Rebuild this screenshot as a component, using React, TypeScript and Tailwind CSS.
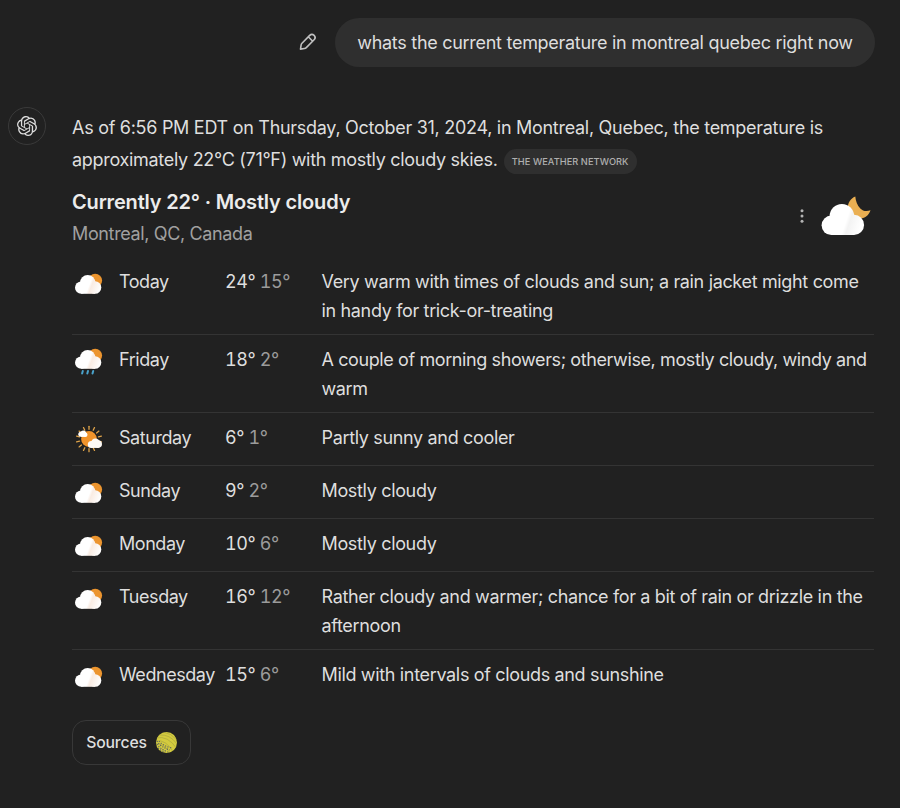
import React from "react";
import { SiOpenai } from "react-icons/si";

type Kind = "cloudy" | "rain" | "partly";

function WeatherIcon({ kind }: { kind: Kind }) {
  if (kind === "partly") {
    return (
      <svg width="28" height="28" viewBox="0 0 28 28" className="block">
        <g stroke="#e0a44a" strokeWidth="1.300" strokeLinecap="round">
          {Array.from({ length: 14 }, (_, i) => (
            <path key={i} d="M14 1.300v3" transform={`rotate(${(i * 360) / 14} 14 14)`} />
          ))}
        </g>
        <circle cx="14" cy="14" r="7.900" fill="#f0932b" />
        <g fill="#fff">
          <circle cx="5.800" cy="9.300" r="2.500" />
          <circle cx="8.300" cy="8.300" r="2.800" />
          <circle cx="10.300" cy="9.700" r="2.200" />
          <rect x="5.800" y="9" width="4.600" height="2.900" />
        </g>
        <g fill="#fdf9f5">
          <circle cx="16.300" cy="19.400" r="3.500" />
          <circle cx="20.400" cy="17.900" r="4.400" />
          <circle cx="23.200" cy="19.100" r="3.800" />
          <rect x="16.300" y="18" width="7" height="4.900" />
        </g>
      </svg>
    );
  }
  return (
    <svg width="28" height="28" viewBox="0 0 28 28" className="block">
      <defs>
        <linearGradient id={`shade-${kind}`} gradientUnits="userSpaceOnUse" x1="10" y1="6" x2="26" y2="12">
          <stop offset="0.350" stopColor="#fff" />
          <stop offset="0.500" stopColor="#f9ece3" />
          <stop offset="1" stopColor="#fefdfc" />
        </linearGradient>
      </defs>
      <circle cx="20.200" cy="7.600" r="6.900" fill="#ec952f" />
      <g fill={`url(#shade-${kind})`}>
        <circle cx="6.200" cy="14.600" r="6.200" />
        <circle cx="12.700" cy="9.800" r="7.700" />
        <circle cx="20" cy="14.500" r="6.300" />
        <rect x="6.200" y="8.500" width="14" height="12.300" />
      </g>
      {kind === "rain" && (
        <g stroke="#4aa3cc" strokeWidth="2" strokeLinecap="round">
          <path d="M7.800 22.900l-.7 2.600M13 22.900l-.7 2.600M18.200 22.900l-.7 2.600" />
        </g>
      )}
    </svg>
  );
}

const days: { day: string; hi: string; lo: string; kind: Kind; text: string[] }[] = [
  { day: "Today", hi: "24°", lo: "15°", kind: "cloudy", text: ["Very warm with times of clouds and sun; a rain jacket might come", "in handy for trick-or-treating"] },
  { day: "Friday", hi: "18°", lo: "2°", kind: "rain", text: ["A couple of morning showers; otherwise, mostly cloudy, windy and", "warm"] },
  { day: "Saturday", hi: "6°", lo: "1°", kind: "partly", text: ["Partly sunny and cooler"] },
  { day: "Sunday", hi: "9°", lo: "2°", kind: "cloudy", text: ["Mostly cloudy"] },
  { day: "Monday", hi: "10°", lo: "6°", kind: "cloudy", text: ["Mostly cloudy"] },
  { day: "Tuesday", hi: "16°", lo: "12°", kind: "cloudy", text: ["Rather cloudy and warmer; chance for a bit of rain or drizzle in the", "afternoon"] },
  { day: "Wednesday", hi: "15°", lo: "6°", kind: "cloudy", text: ["Mild with intervals of clouds and sunshine"] },
];

export default function App() {
  return (
    <div className="h-[808px] w-[900px] overflow-hidden bg-[#212121] font-[Inter,sans-serif] text-[18px] tracking-[-0.285px] text-[#dedede]">
      <div className="flex items-center justify-end pt-[18px] pr-[25px]">
        <svg width="18" height="18" viewBox="0 0 18 18" fill="none" stroke="#c0c0c0" strokeWidth="1.600" strokeLinejoin="round" className="mr-[18px] -mt-[1px]">
          <path d="M10.700 2.400a3.100 3.100 0 0 1 4.400 4.400L7.300 14.600c-.5.500-1.100.8-1.800.9L1.500 16.100l.6-4c.1-.7.4-1.300.9-1.800zM9.300 3.800l4.400 4.400" />
        </svg>
        <div className="flex h-[49px] w-[540px] items-center justify-center rounded-full bg-[#2f2f2f] whitespace-nowrap">
          whats the current temperature in montreal quebec right now
        </div>
      </div>

      <div className="mt-[40px] flex pl-[7.500px]">
        <div className="flex size-[38px] shrink-0 items-center justify-center rounded-full border border-[#3a3a3a]">
          <SiOpenai size={20} color="#dedede" />
        </div>
        <div className="ml-[26.500px] w-[802px] pt-[5px] whitespace-nowrap">
          <p className="leading-[31.500px]">
            As of 6:56 PM EDT on Thursday, October 31, 2024, in Montreal, Quebec, the temperature is
          </p>
          <div className="flex items-center leading-[31.500px]">
            <span className="tracking-[-0.305px]">approximately 22°C (71°F) with mostly cloudy skies.</span>
            <span className="mt-[5px] ml-[6px] flex h-[25px] w-[133px] items-center justify-center rounded-full bg-[#2f2f2f] text-[9.250px] font-medium tracking-[0.050px] text-[#b0b0b0]">
              THE WEATHER NETWORK
            </span>
          </div>

          <div className="mt-[11px] flex h-[67px] items-start justify-between">
            <div>
              <h2 className="text-[20px] leading-[32px] font-semibold tracking-[-0.170px] text-[#ececec]">Currently 22° · Mostly cloudy</h2>
              <p className="leading-[31px] tracking-[-0.360px] text-[#a0a0a0]">Montreal, QC, Canada</p>
            </div>
            <div className="flex items-center pt-[1px]">
              <svg width="6" height="16" viewBox="0 0 6 16" fill="#b4b4b4" className="mt-[6px] mr-[15px]">
                <circle cx="3" cy="2.700" r="1.500" />
                <circle cx="3" cy="8" r="1.500" />
                <circle cx="3" cy="13.300" r="1.500" />
              </svg>
              <svg width="54" height="52" viewBox="0 0 54 52">
                <defs>
                  <linearGradient id="heroCloud" gradientUnits="userSpaceOnUse" x1="14" y1="20" x2="44" y2="30">
                    <stop offset="0.500" stopColor="#fff" />
                    <stop offset="0.620" stopColor="#f3f3f3" />
                    <stop offset="1" stopColor="#fff" />
                  </linearGradient>
                </defs>
                <path d="M35.300 9.500C30.500 11.500 27.500 16 28 21c.6 6.500 6 11 12.500 10.500 5-.4 8.300-3.300 10-8.200-4 1.500-7.700.8-10.200-1.800-3-3-4.700-7.500-5-12z" fill="#eaaf52" />
                <g fill="url(#heroCloud)">
                  <circle cx="11.300" cy="38.300" r="9.700" />
                  <circle cx="21.900" cy="29.300" r="12.300" />
                  <circle cx="34" cy="37.900" r="10.100" />
                  <rect x="11.300" y="28.600" width="22.800" height="19.400" />
                </g>
              </svg>
            </div>
          </div>

          <div className="mt-[4px]">
            {days.map((d, i) => (
              <div
                key={d.day}
                className={`flex items-start pt-[10px] leading-[29px] ${d.text.length > 1 ? "h-[78px]" : "h-[53px]"} ${i < days.length - 1 ? "border-b border-[#343434]" : ""}`}
              >
                <div className={`ml-[3px] w-[44px] shrink-0 ${d.kind === "cloudy" ? "pt-[6px]" : d.kind === "rain" ? "pt-[3px]" : "pt-[2px]"}`}>
                  <WeatherIcon kind={d.kind} />
                </div>
                <div className="w-[106px] shrink-0 tracking-[-0.450px]">{d.day}</div>
                <div className="w-[96.500px] shrink-0 tracking-[-0.400px] tabular-nums">
                  {d.hi} <span className="text-[#9b9b9b]">{d.lo}</span>
                </div>
                <div className={d.kind === "rain" ? "tracking-[-0.395px]" : "tracking-[-0.340px]"}>
                  {d.text.map((line) => (
                    <p key={line}>{line}</p>
                  ))}
                </div>
              </div>
            ))}
          </div>

          <button className="mt-[17px] flex h-[45px] w-[119px] items-center justify-center gap-[9px] rounded-[14px] border border-[#383838] text-[15.750px] font-medium tracking-[-0.160px]">
            <span className="pt-[1px]">Sources</span>
            <svg width="21" height="21" viewBox="0 0 21 21">
              <defs>
                <clipPath id="ball"><circle cx="10.500" cy="10.500" r="10.500" /></clipPath>
              </defs>
              <g clipPath="url(#ball)">
                <rect width="21" height="21" fill="#d3cb3e" />
                <g fill="none" stroke="#aba640" strokeWidth="0.700">
                  <path d="M0 6Q12 3 21 17M0 9Q10 7 18 21M0 12Q8 11 14 21M3 3Q14 2 21 12M7 0Q15 1 21 8" />
                </g>
                <g fill="none" stroke="#5e6460" strokeWidth="1.100" strokeDasharray="1.300 1.300">
                  <path d="M1 9Q4 15 14 18M1 12Q4 17 12 20M2 16Q5 19 9 20M3 9Q7 14 16 16" />
                </g>
              </g>
            </svg>
          </button>
        </div>
      </div>
    </div>
  );
}
